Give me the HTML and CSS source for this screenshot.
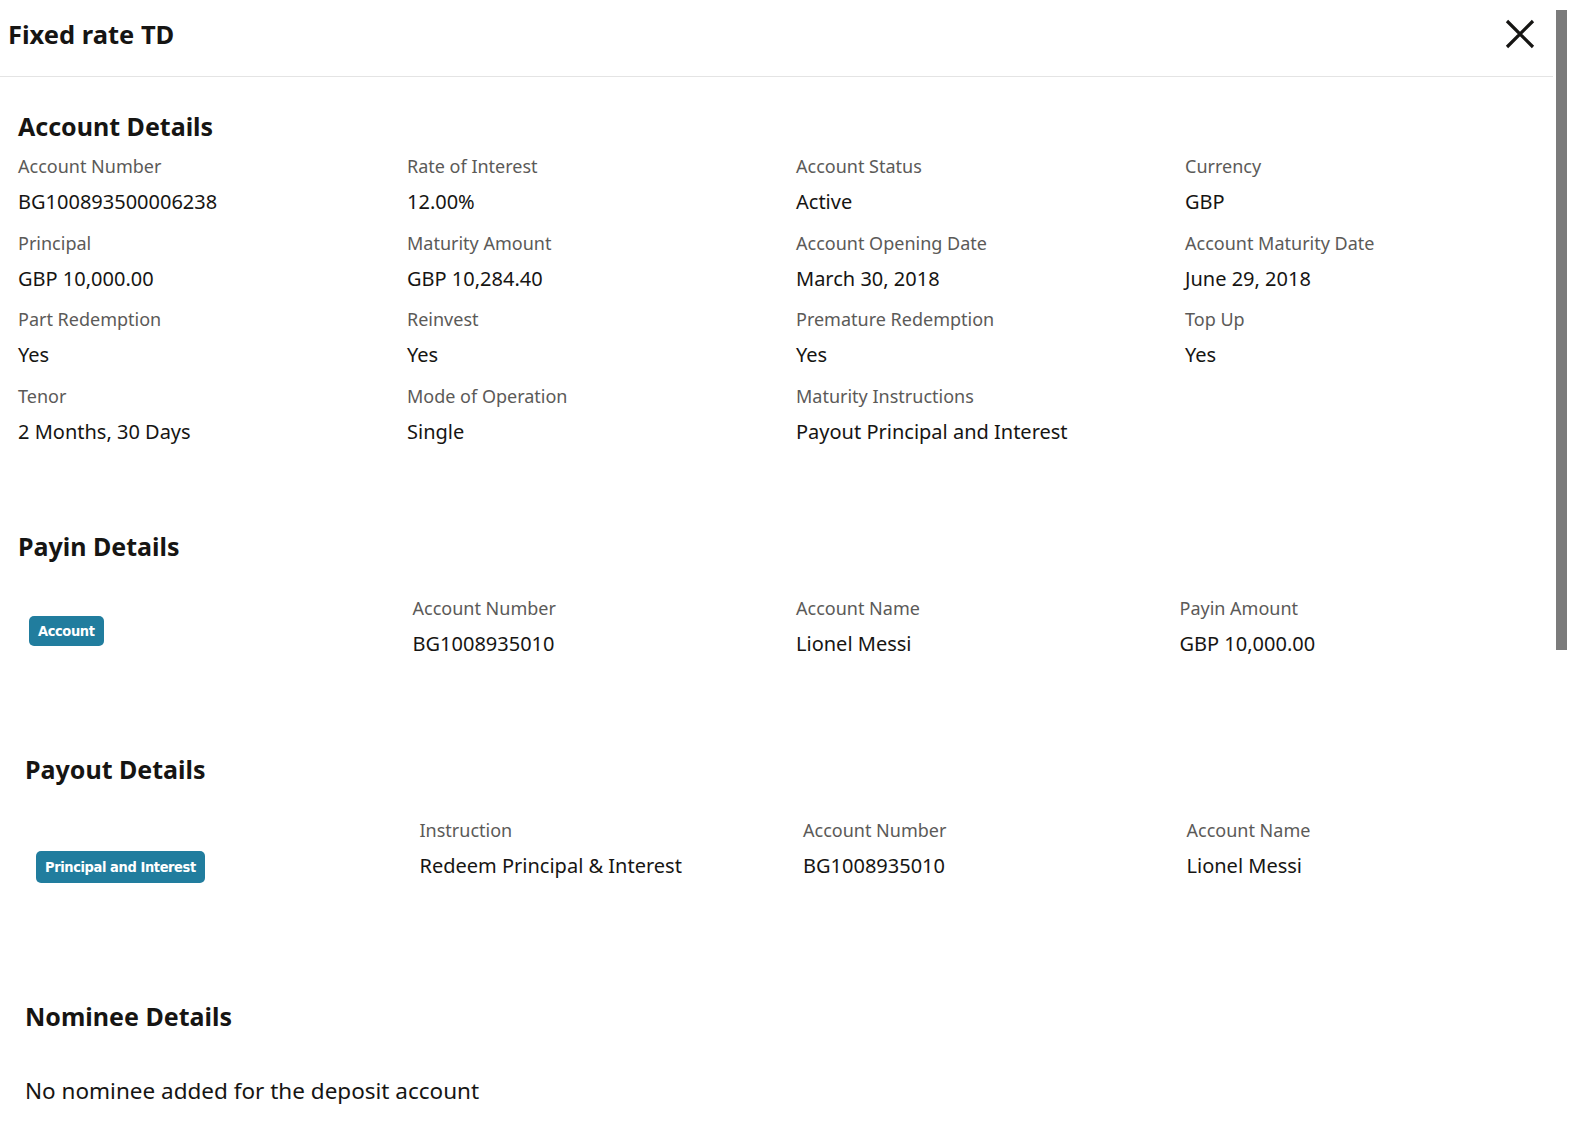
FILE: index.html
```html
<!DOCTYPE html>
<html lang="en">
<head>
<meta charset="utf-8">
<title>Fixed rate TD</title>
<link rel="stylesheet" href="styles.css">
</head>
<body>
<div class="frame">
  <div class="main">
    <header class="topbar">
      <h1 class="title">Fixed rate TD</h1>
      <button class="close" aria-label="Close">
        <svg width="30" height="30" viewBox="0 0 30 30"><path d="M2 2 L28 28 M28 2 L2 28" stroke="#161513" stroke-width="3.2" fill="none"/></svg>
      </button>
    </header>

    <section class="section account">
      <h2 class="heading">Account Details</h2>
      <div class="grid4">
        <div class="field"><div class="label">Account Number</div><div class="value">BG100893500006238</div></div>
        <div class="field"><div class="label">Rate of Interest</div><div class="value">12.00%</div></div>
        <div class="field"><div class="label">Account Status</div><div class="value">Active</div></div>
        <div class="field"><div class="label">Currency</div><div class="value">GBP</div></div>
        <div class="field"><div class="label">Principal</div><div class="value">GBP 10,000.00</div></div>
        <div class="field"><div class="label">Maturity Amount</div><div class="value">GBP 10,284.40</div></div>
        <div class="field"><div class="label">Account Opening Date</div><div class="value">March 30, 2018</div></div>
        <div class="field"><div class="label">Account Maturity Date</div><div class="value">June 29, 2018</div></div>
        <div class="field"><div class="label">Part Redemption</div><div class="value">Yes</div></div>
        <div class="field"><div class="label">Reinvest</div><div class="value">Yes</div></div>
        <div class="field"><div class="label">Premature Redemption</div><div class="value">Yes</div></div>
        <div class="field"><div class="label">Top Up</div><div class="value">Yes</div></div>
        <div class="field"><div class="label">Tenor</div><div class="value">2 Months, 30 Days</div></div>
        <div class="field"><div class="label">Mode of Operation</div><div class="value">Single</div></div>
        <div class="field"><div class="label">Maturity Instructions</div><div class="value">Payout Principal and Interest</div></div>
      </div>
    </section>

    <section class="section payin">
      <h2 class="heading">Payin Details</h2>
      <div class="row4 payin-row">
        <div class="badge-cell"><span class="badge">Account</span></div>
        <div class="field"><div class="label">Account Number</div><div class="value">BG1008935010</div></div>
        <div class="field"><div class="label">Account Name</div><div class="value">Lionel Messi</div></div>
        <div class="field"><div class="label">Payin Amount</div><div class="value">GBP 10,000.00</div></div>
      </div>
    </section>

    <section class="section payout">
      <h2 class="heading">Payout Details</h2>
      <div class="row4 payout-row">
        <div class="badge-cell"><span class="badge badge-tall">Principal and Interest</span></div>
        <div class="field"><div class="label">Instruction</div><div class="value">Redeem Principal &amp; Interest</div></div>
        <div class="field"><div class="label">Account Number</div><div class="value">BG1008935010</div></div>
        <div class="field"><div class="label">Account Name</div><div class="value">Lionel Messi</div></div>
      </div>
    </section>

    <section class="section nominee">
      <h2 class="heading">Nominee Details</h2>
      <p class="empty">No nominee added for the deposit account</p>
    </section>
  </div>
  <div class="scrollbar"><div class="thumb"></div></div>
</div>
</body>
</html>
```

FILE: styles.css
```css
* { box-sizing: border-box; }
html, body {
  margin: 0;
  padding: 0;
  background: #ffffff;
  font-family: "Noto Sans", "Open Sans", sans-serif;
  color: #161513;
  overflow: hidden;
}
.frame {
  display: flex;
  width: 1570px;
  height: 1146px;
}
.main {
  flex: 1;
  min-width: 0;
}
.scrollbar {
  width: 17px;
  padding: 10px 3px 0 3px;
}
.thumb {
  width: 11px;
  height: 640px;
  background: #7b7b7b;
}
.topbar {
  height: 77px;
  border-bottom: 1px solid #e4e4e4;
  display: flex;
  align-items: flex-start;
  justify-content: space-between;
  padding: 0 18px 0 8px;
}
.title {
  margin: 16px 0 0 0;
  font-size: 25.5px;
  line-height: 36px;
  font-weight: 700;
}
.close {
  margin-top: 19px;
  padding: 0;
  border: 0;
  background: none;
  width: 30px;
  height: 30px;
  cursor: pointer;
}
.close svg { display: block; }
.heading {
  margin: 0;
  font-size: 25px;
  line-height: 32px;
  font-weight: 700;
}
.label {
  font-size: 18px;
  line-height: 24px;
  color: #5b5a58;
}
.value {
  font-size: 20px;
  line-height: 28px;
  margin-top: 10px;
}
.account {
  padding: 33px 0 0 18px;
}
.grid4 {
  margin-top: 12px;
  display: grid;
  grid-template-columns: repeat(4, 389px);
  row-gap: 14.7px;
}
.row4 {
  display: grid;
  grid-template-columns: repeat(4, 383.5px);
}
.payin {
  padding: 84px 0 0 18px;
}
.payin-row {
  margin: 34px 0 0 11px;
}
.payin-row .badge-cell { padding-top: 20px; }
.payout {
  padding: 95px 0 0 25px;
}
.payout-row {
  margin: 33px 0 0 11px;
}
.payout-row .badge-cell { padding-top: 33px; }
.badge {
  display: inline-block;
  background: #217d9e;
  color: #ffffff;
  font-family: "DejaVu Sans Condensed", "DejaVu Sans", sans-serif;
  font-stretch: condensed;
  font-weight: 700;
  font-size: 14.5px;
  letter-spacing: -0.4px;
  line-height: 30px;
  height: 30px;
  padding: 0 9px;
  border-radius: 5px;
}
.badge-tall {
  height: 32px;
  line-height: 32px;
}
.nominee {
  padding: 117px 0 0 25px;
}
.empty {
  margin: 44px 0 0 0;
  font-size: 22.5px;
  line-height: 30px;
}
```
